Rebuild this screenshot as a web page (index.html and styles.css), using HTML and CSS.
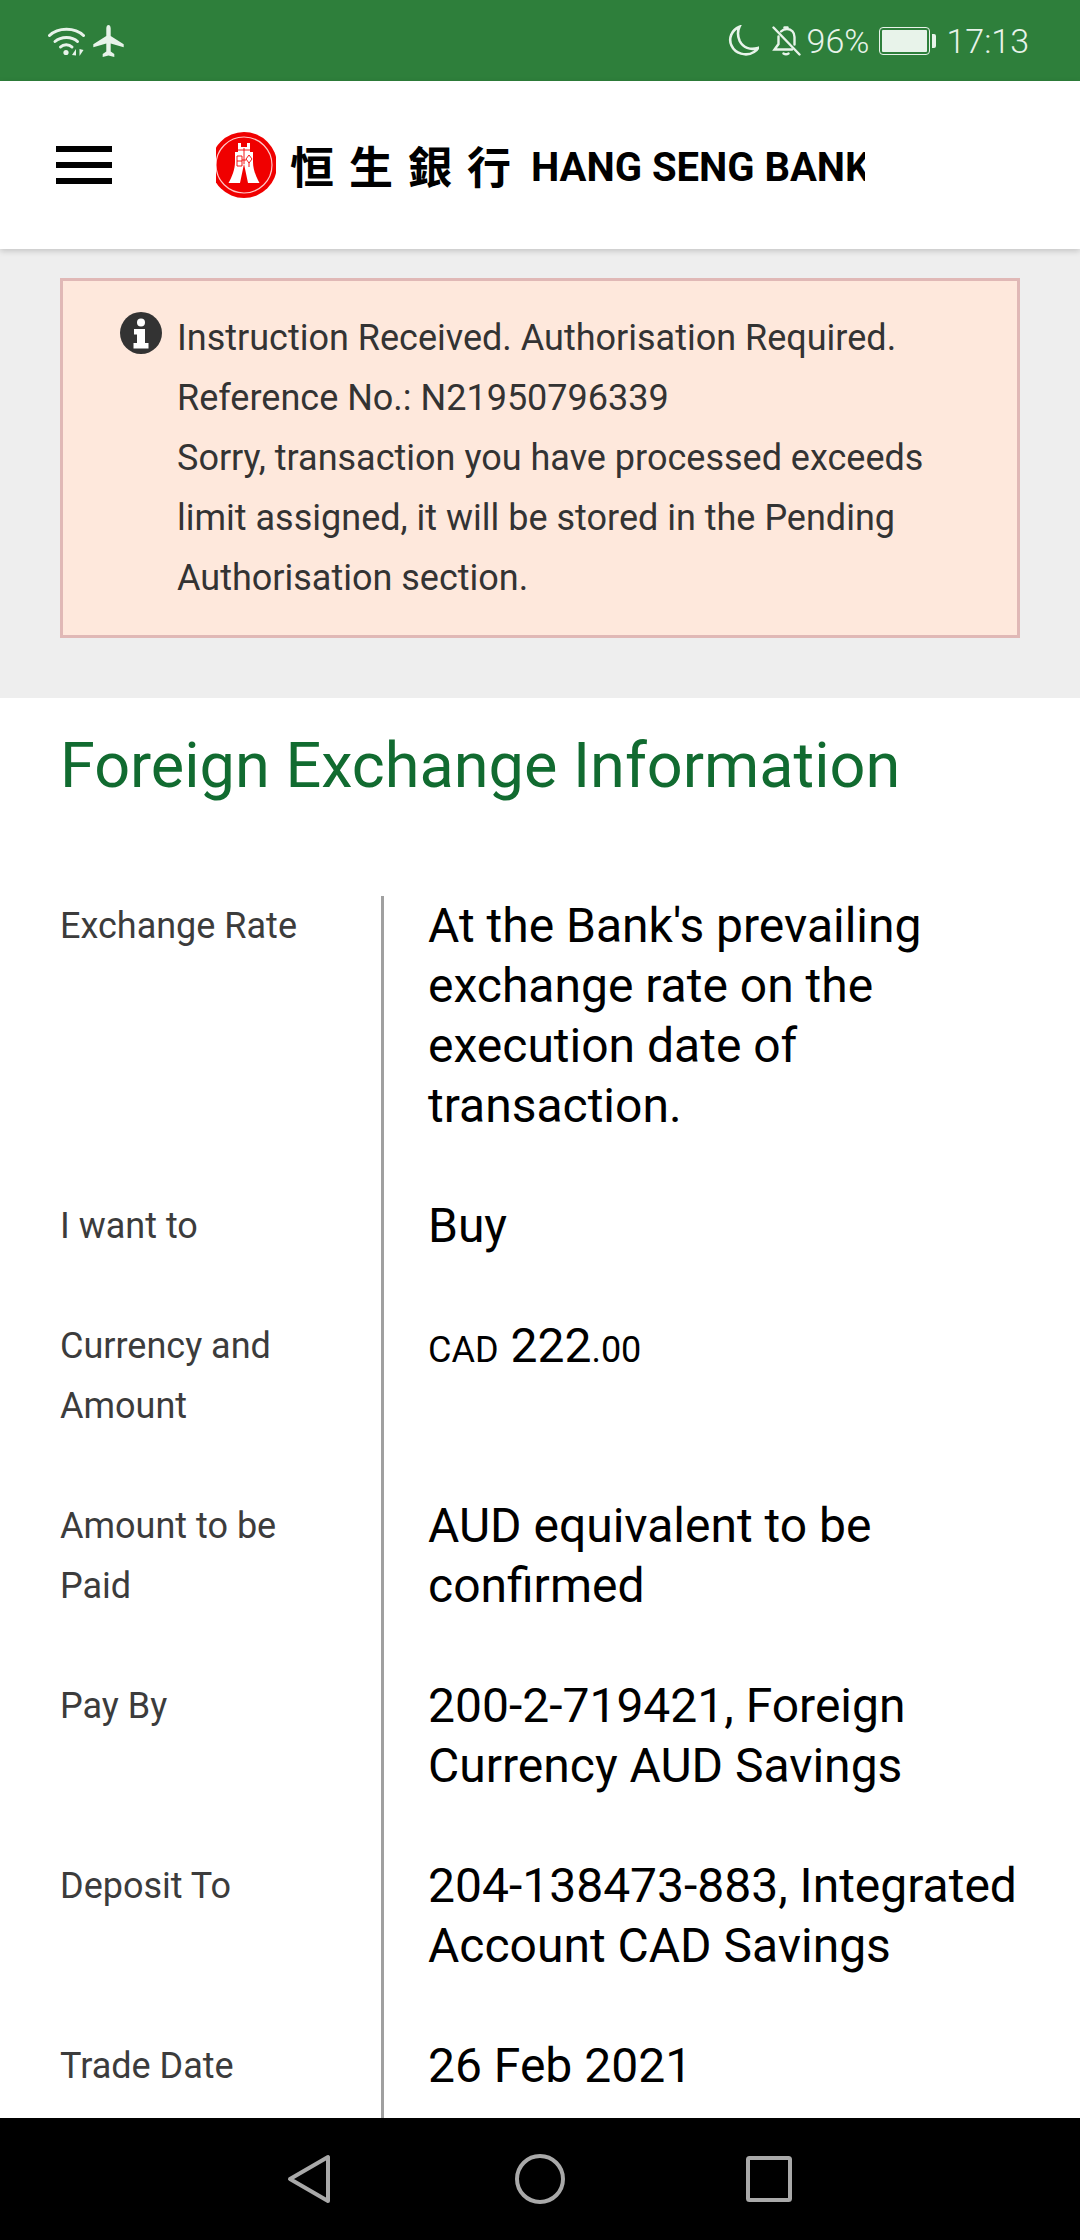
FILE: index.html
```html
<!DOCTYPE html>
<html lang="en">
<head>
<meta charset="utf-8">
<title>Foreign Exchange Information</title>
<link rel="stylesheet" href="styles.css">
</head>
<body>
<div class="phone">
  <div class="status">
    <div class="status-left">
      <svg class="i-wifi" viewBox="0 0 37 31" fill="none" stroke="#e8f3ea" stroke-width="3" stroke-linecap="round">
        <path d="M1.500 10.500C10 2 27 2 35.500 10.500"/>
        <path d="M7 16.500C13 11 24 11 29.500 16.500"/>
        <path d="M12.500 22C15.500 19 21 19 24 22"/>
        <circle cx="18" cy="27.500" r="2.600" fill="#e8f3ea" stroke="none"/>
        <path d="M28 24v6.500l-4-.5z" fill="#e8f3ea" stroke="none"/>
        <path d="M31.500 24v7l4-6z" fill="#e8f3ea" stroke="none"/>
      </svg>
      <svg class="i-plane" viewBox="0 0 31 32" fill="#e8f3ea">
        <path d="M15.500 0c1.400 0 2.200 1.600 2.200 3.500V11l13 8.200v3l-13-3.800v8l3.600 2.600V32l-5.800-1.400L9.700 32v-3l3.600-2.600v-8L.3 22.200v-3l13-8.200V3.500c0-1.900.8-3.500 2.200-3.500z"/>
      </svg>
    </div>
    <div class="status-right">
      <svg class="i-moon" viewBox="0 0 31 31" fill="none" stroke="#e8f3ea" stroke-width="2.600">
        <path d="M11.500 1.800C3.500 5 .2 13.500 3.500 20.500 7 28.500 18 32 26 27c1.800-1.100 3.200-2.500 4-4-8 2.500-15-.5-18.300-7C9.500 11 9.500 6 11.500 1.800z"/>
      </svg>
      <svg class="i-bell" viewBox="0 0 29 30" fill="none" stroke="#e8f3ea" stroke-width="2.400" stroke-linecap="round">
        <path d="M6.500 10.500V18L2.500 23.500H20"/>
        <path d="M9 5.500C11 3.500 13 3 15 3c4.500 0 7.500 3.500 7.500 8v7.500"/>
        <path d="M12.500 1.500h3"/>
        <path d="M11.500 27.500c1.500 1 3.500 1 5 0"/>
        <path d="M1.500 1.500l26 27"/>
      </svg>
      <span class="pct">96%</span>
      <div class="battery"><div class="battery-body"><div class="battery-fill"></div></div><div class="battery-tip"></div></div>
      <span class="time">17:13</span>
    </div>
  </div>

  <header class="topbar">
    <div class="burger"><span></span><span></span><span></span></div>
    <div class="logo">
      <svg class="emblem" viewBox="0 0 60 66">
        <circle cx="28" cy="33" r="33" fill="#f00000"/>
        <circle cx="28" cy="33" r="28" fill="none" stroke="#ffc8c8" stroke-width="1.200"/>
        <path d="M22 11h3v4h6v-4h3v9h3v10c0 7 3 15 6.500 21H32L28 32l-4 19H12.500C16 45 19 37 19 30V20h3z" fill="#fff"/>
        <path d="M21 24h5v10h-5zM21 29h5M33 23l3 4-3 4-3-4zM33 31v4M26 28h4M28 16v16M22 18h12" fill="none" stroke="#f00000" stroke-width=".9"/>
      </svg>
      <span class="logo-cjk">恒生銀行</span>
      <span class="logo-en">HANG SENG BANK</span>
    </div>
  </header>

  <main class="content">
    <section class="notice-wrap">
      <div class="notice">
        <svg class="i-info" viewBox="0 0 42 42">
          <circle cx="21" cy="21" r="21" fill="#333"/>
          <circle cx="21" cy="10.500" r="4" fill="#fff"/>
          <path d="M14 17h11v14h3.500v5.500h-15V31H17v-8.500h-3z" fill="#fff"/>
        </svg>
        <p class="notice-text">Instruction Received. Authorisation Required.<br>Reference No.: N21950796339<br>Sorry, transaction you have processed exceeds limit assigned, it will be stored in the Pending Authorisation section.</p>
      </div>
    </section>

    <section class="details">
      <h1 class="title">Foreign Exchange Information</h1>
      <dl class="list">
        <div class="row"><dt>Exchange Rate</dt><dd>At the Bank's prevailing exchange rate on the execution date of transaction.</dd></div>
        <div class="row"><dt>I want to</dt><dd>Buy</dd></div>
        <div class="row"><dt>Currency and Amount</dt><dd><span class="cur">CAD</span> <span class="amt">222</span><span class="cur">.00</span></dd></div>
        <div class="row"><dt>Amount to be Paid</dt><dd>AUD equivalent to be confirmed</dd></div>
        <div class="row"><dt>Pay By</dt><dd>200-2-719421, Foreign Currency AUD Savings</dd></div>
        <div class="row"><dt>Deposit To</dt><dd>204-138473-883, Integrated Account CAD Savings</dd></div>
        <div class="row"><dt>Trade Date</dt><dd>26 Feb 2021</dd></div>
      </dl>
    </section>
  </main>

  <nav class="navbar">
    <svg class="nav-back" viewBox="0 0 44 50" fill="none" stroke="#a9a9a9" stroke-width="4" stroke-linejoin="round"><path d="M41 3v44L3 25z"/></svg>
    <svg class="nav-home" viewBox="0 0 50 50" fill="none" stroke="#a9a9a9" stroke-width="4"><circle cx="25" cy="25" r="23"/></svg>
    <svg class="nav-recent" viewBox="0 0 46 46" fill="none" stroke="#a9a9a9" stroke-width="4" stroke-linejoin="round"><rect x="2" y="2" width="42" height="42" rx="1.500"/></svg>
  </nav>
</div>
</body>
</html>
```

FILE: styles.css
```css
* { box-sizing: border-box; }
html, body { margin: 0; padding: 0; }
body { font-family: Roboto, "Noto Sans", sans-serif; background: #fff; }

.phone {
  width: 1080px;
  height: 2240px;
  display: flex;
  flex-direction: column;
  overflow: hidden;
}

/* status bar */
.status {
  height: 81px;
  flex: none;
  background: #2e7f3b;
  display: flex;
  align-items: center;
  justify-content: space-between;
  padding: 0 51px 0 48px;
  color: #e8f3ea;
}
.status-left, .status-right { display: flex; align-items: center; }
.i-wifi { width: 37px; height: 31px; }
.i-plane { width: 31px; height: 32px; margin-left: 8px; }
.i-moon { width: 31px; height: 31px; }
.i-bell { width: 29px; height: 30px; margin-left: 13px; }
.pct, .time { font-size: 34px; font-weight: 300; line-height: 40px; }
.pct { margin-left: 6px; }
.time { margin-left: 10px; }
.battery { display: flex; align-items: center; margin-left: 10px; }
.battery-body {
  width: 51px;
  height: 28px;
  border: 1.500px solid #e8f3ea;
  border-radius: 4px;
  padding: 2px;
}
.battery-fill { width: 100%; height: 100%; background: #e8f3ea; border-radius: 1px; }
.battery-tip { width: 4px; height: 14px; background: #e8f3ea; border-radius: 0 2px 2px 0; margin-left: 2px; }

/* header */
.topbar {
  height: 168px;
  flex: none;
  background: #fff;
  display: flex;
  align-items: center;
  padding-left: 56px;
  position: relative;
  z-index: 1;
  box-shadow: 0 2px 6px rgba(0, 0, 0, .18);
}
.burger { width: 56px; display: flex; flex-direction: column; gap: 10px; }
.burger span { display: block; height: 6px; background: #000; }
.logo {
  margin-left: 104px;
  width: 649px;
  height: 70px;
  overflow: hidden;
  display: flex;
  align-items: center;
  white-space: nowrap;
  color: #000;
}
.emblem { width: 60px; height: 66px; flex: none; }
.logo-cjk {
  margin-left: 14px;
  font-family: "Noto Sans CJK TC", sans-serif;
  font-size: 44px;
  font-weight: 700;
  letter-spacing: 15px;
  line-height: 50px;
  flex: none;
}
.logo-en {
  margin-left: 5px;
  font-size: 40px;
  font-weight: 700;
  line-height: 50px;
  padding-top: 6px;
  flex: none;
}

/* content */
.content { flex: 1; min-height: 0; overflow: hidden; }
.notice-wrap { background: #eee; padding: 29px 60px 60px; }
.notice {
  height: 360px;
  background: #fee8dc;
  border: 3px solid #e0b8b6;
  padding: 27px 60px 0 57px;
  display: flex;
  align-items: flex-start;
  gap: 15px;
}
.i-info { width: 42px; height: 42px; flex: none; margin-top: 4px; }
.notice-text { margin: 0; font-size: 36px; line-height: 60px; color: #333; }

.details { padding: 38px 60px 0; background: #fff; }
.title {
  margin: 0 0 100px;
  font-size: 63px;
  line-height: 60px;
  font-weight: 400;
  color: #116b30;
}
.list { margin: 0; }
.row { display: grid; grid-template-columns: 321px 1fr; }
.row dt { font-size: 36px; line-height: 60px; color: #3c3c3c; padding: 0 40px 60px 0; }
.row dd {
  margin: 0;
  border-left: 3px solid #a0a0a0;
  padding: 0 0 60px 44px;
  font-size: 48px;
  line-height: 60px;
  color: #000;
}
.cur { font-size: 36px; }
.amt { font-size: 48px; }

/* nav */
.navbar {
  height: 122px;
  flex: none;
  background: #000;
  display: flex;
  align-items: center;
  padding-left: 287px;
}
.nav-back { width: 44px; height: 50px; }
.nav-home { width: 50px; height: 50px; margin-left: 184px; }
.nav-recent { width: 46px; height: 46px; margin-left: 181px; }
```
